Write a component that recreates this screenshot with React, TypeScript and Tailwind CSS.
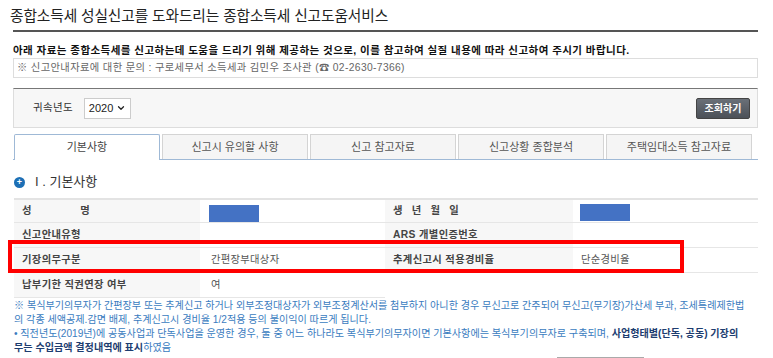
import { ChevronDown } from "lucide-react";

const tabs = ["기본사항", "신고시 유의할 사항", "신고 참고자료", "신고상황 종합분석", "주택임대소득 참고자료"];

function Spread({ text, width }: { text: string; width: string }) {
  return (
    <span className={`flex justify-between ${width}`}>
      {text.split("").map((c, i) => (
        <span key={i}>{c}</span>
      ))}
    </span>
  );
}

function Masked({ className }: { className: string }) {
  return <div className={`bg-[#4472c4] w-[50px] h-[17px] ${className}`} />;
}

const label = "bg-[#f7f7f7] pl-[8px] flex items-center font-bold text-[#444] tracking-[0.35px]";

export default function App() {
  return (
    <div className="relative w-[773px] h-[358px] overflow-hidden bg-white text-[#333] font-['Liberation_Sans','Noto_Sans_CJK_KR',sans-serif]">
      <div className="pl-[13px] pr-[15px]">
        {/* title */}
        <h1 className="-ml-[3px] pt-[6px] h-[30px] text-[14.7px] leading-[20px] text-[#222] tracking-[-0.1px]">
          종합소득세 성실신고를 도와드리는 종합소득세 신고도움서비스
        </h1>
        <div className="h-[2px] bg-[#555]" />

        {/* notice */}
        <p className="mt-[11px] text-[10.5px] leading-[14px] font-bold text-[#111] whitespace-nowrap tracking-[0.45px]">
          아래 자료는 종합소득세를 신고하는데 도움을 드리기 위해 제공하는 것으로, 이를 참고하여 실질 내용에 따라 신고하여 주시기 바랍니다.
        </p>
        <div className="mt-[1px] h-[20px] border border-[#ddd] pl-[3px] text-[10.3px] leading-[18px] text-[#666] whitespace-nowrap tracking-[0.35px]">
          ※ 신고안내자료에 대한 문의 : 구로세무서 소득세과 김민우 조사관 (☎ 02-2630-7366)
        </div>

        {/* search panel */}
        <div className="mt-[10px] h-[40px] border border-[#ddd] border-t-[#777] bg-[#f7f7f7] flex items-center pl-[19px] pr-[7px]">
          <span className="text-[10.5px] text-[#333] tracking-[0.3px]">귀속년도</span>
          <div className="ml-[11px] w-[47px] h-[21px] bg-white border border-[#ccc] flex items-center justify-between pl-[4px] pr-[4px] text-[11px] text-[#222]">
            2020
            <ChevronDown size={10} strokeWidth={3} />
          </div>
          <button className="ml-auto w-[54px] h-[21px] rounded-[2px] bg-gradient-to-b from-[#6a7078] to-[#4c5158] border border-[#444] text-white text-[10px] font-bold">
            조회하기
          </button>
        </div>

        {/* tabs */}
        <div className="mt-[6px] flex gap-[2px] border-b border-[#9fb9d6] h-[26px] pl-[1px]">
          {tabs.map((t, i) => (
            <div
              key={t}
              className={
                i === 0
                  ? "w-[146px] h-[26px] bg-white border border-b-0 border-[#9fb9d6] rounded-t-[2px] flex items-center justify-center text-[11px] text-[#444]"
                  : "w-[146px] h-[25px] bg-[#f5f5f5] border border-b-0 border-[#d4d4d4] flex items-center justify-center text-[11px] text-[#555]"
              }
            >
              {t}
            </div>
          ))}
        </div>

        {/* section heading */}
        <div className="mt-[14px] flex items-center gap-[10px] pl-[1px]">
          <span className="w-[11px] h-[11px] rounded-full bg-[#1c6fb5] flex items-center justify-center text-white text-[9px] leading-none font-bold">
            +
          </span>
          <span className="text-[13px] text-[#333] leading-[16px]">I . 기본사항</span>
        </div>

        {/* table */}
        <div className="mt-[8px] ml-[1px] border-t-2 border-[#e3e3e3] text-[10.3px]">
          <div className="flex h-[23px] border-b border-[#e6e6e6]">
            <div className={`w-[186px] ${label}`}>
              <Spread text="성명" width="w-[68px]" />
            </div>
            <div className="w-[185px] flex items-end pl-[9px]">
              <Masked className="" />
            </div>
            <div className={`w-[188px] ${label}`}>
              <Spread text="생년월일" width="w-[66px]" />
            </div>
            <div className="flex-1 flex items-end pl-[7px]">
              <Masked className="mb-[1px]" />
            </div>
          </div>
          <div className="flex h-[25px] border-b border-[#e6e6e6]">
            <div className={`w-[186px] ${label}`}>신고안내유형</div>
            <div className="w-[185px]" />
            <div className={`w-[188px] ${label}`}>ARS 개별인증번호</div>
            <div className="flex-1" />
          </div>
          <div className="flex h-[25px] border-b border-[#e6e6e6]">
            <div className={`w-[186px] ${label}`}>기장의무구분</div>
            <div className="w-[185px] pl-[11px] flex items-center text-[#555] tracking-[0.3px]">간편장부대상자</div>
            <div className={`w-[188px] ${label}`}>추계신고시 적용경비율</div>
            <div className="flex-1 pl-[8px] flex items-center text-[#555] tracking-[0.3px]">단순경비율</div>
          </div>
          <div className="flex h-[25px] w-[371px] border-b border-[#e6e6e6]">
            <div className={`w-[186px] ${label}`}>납부기한 직권연장 여부</div>
            <div className="w-[185px] pl-[11px] flex items-center text-[#555]">여</div>
          </div>
        </div>

        {/* notes */}
        <div className="mt-[1px] ml-[1px] text-[10.1px] leading-[14px] text-[#3a7cc0] whitespace-nowrap">
          <p>※ 복식부기의무자가 간편장부 또는 추계신고 하거나 외부조정대상자가 외부조정계산서를 첨부하지 아니한 경우 무신고로 간주되어 무신고(무기장)가산세 부과, 조세특례제한법</p>
          <p>의 각종 세액공제.감면 배제, 추계신고시 경비율 1/2적용 등의 불이익이 따르게 됩니다.</p>
          <p>
            • 직전년도(2019년)에 공동사업과 단독사업을 운영한 경우, 둘 중 어느 하나라도 복식부기의무자이면 기본사항에는 복식부기의무자로 구축되며,{" "}
            <b className="text-[#1d3d70]">사업형태별(단독, 공동) 기장의</b>
          </p>
          <p>
            <b className="text-[#1d3d70]">무는 수입금액 결정내역에 표시</b>하였음
          </p>
        </div>
        <div className="ml-[544px] mt-[2px] w-[87px] h-[20px] border border-[#aaa] bg-[#f5f5f5]" />
      </div>

      {/* highlight */}
      <div className="absolute left-[8px] top-[240px] w-[676px] h-[33px] border-[4px] border-[#ff0000] pointer-events-none" />
    </div>
  );
}
